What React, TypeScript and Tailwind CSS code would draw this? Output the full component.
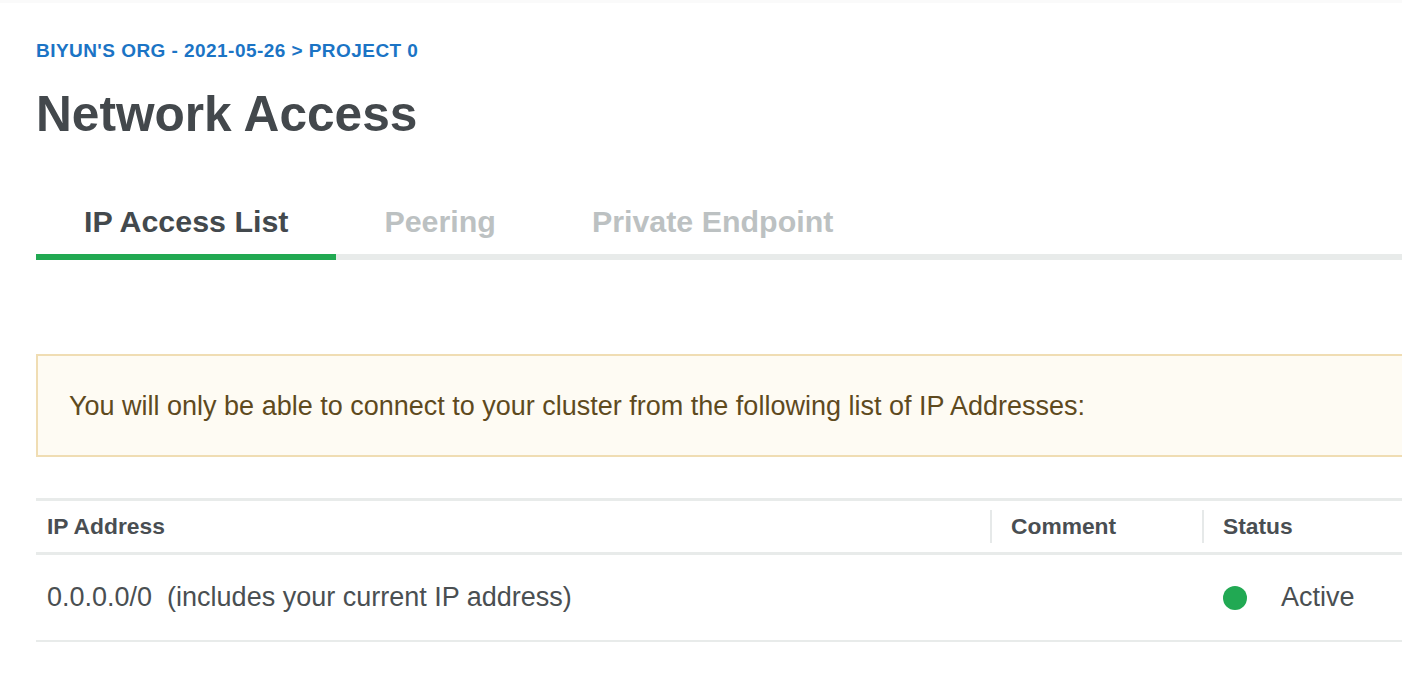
const tabs = [
  { label: "IP Access List", active: true },
  { label: "Peering", active: false },
  { label: "Private Endpoint", active: false },
]

export default function App() {
  return (
    <div
      className="min-h-screen w-full overflow-hidden bg-white"
      style={{ fontFamily: '"Liberation Sans", Arial, sans-serif' }}
    >
      <div className="h-[3px] bg-[#fafafa]" />
      <div className="w-[1440px] pl-[36px]">
        {/* Breadcrumb */}
        <div className="mt-[36px] text-[19px] font-bold leading-[24px] tracking-[0.45px] text-[#1b74c5]">
          BIYUN'S ORG - 2021-05-26 &gt; PROJECT 0
        </div>

        <h1 className="mt-[23px] text-[49.6px] font-bold leading-[56px] text-[#43484c]">
          Network Access
        </h1>

        {/* Tabs */}
        <div className="mt-[61px] flex">
          {tabs.map((tab) => (
            <div
              key={tab.label}
              className={
                tab.active
                  ? "border-b-[6px] border-[#21a952] px-[48px] pb-[15px] text-[30.4px] font-bold leading-[36px] text-[#43494d]"
                  : "border-b-[6px] border-[#e8ebea] px-[48px] pb-[15px] text-[30.4px] font-bold leading-[36px] text-[#bcc1c2]"
              }
            >
              {tab.label}
            </div>
          ))}
          <div className="flex-1 border-b-[6px] border-[#e8ebea]" />
        </div>

        {/* Banner */}
        <div className="mt-[94px] flex h-[103px] items-center border-2 border-[#f0ddb3] bg-[#fefbf3] pl-[31px]">
          <p className="text-[27px] leading-[32px] text-[#5e4a1e]">
            You will only be able to connect to your cluster from the following list of IP Addresses:
          </p>
        </div>

        {/* Table */}
        <div className="mt-[41px] border-t-[3px] border-[#e8ebea]">
          <div className="flex h-[54px] items-center border-b-[3px] border-[#e8ebea] text-[22.8px] font-bold text-[#494e52]">
            <div className="w-[954px] pl-[11px]">IP Address</div>
            <div className="flex h-[33px] w-[212px] items-center border-l-2 border-[#e6e9e9] pl-[19px]">
              Comment
            </div>
            <div className="flex h-[33px] items-center border-l-2 border-[#e6e9e9] pl-[19px]">
              Status
            </div>
          </div>
          <div className="flex h-[87px] items-center border-b-2 border-[#e8ebea] text-[27px] text-[#4a4f52]">
            <div className="w-[954px] whitespace-pre pl-[11px]">
              0.0.0.0/0  (includes your current IP address)
            </div>
            <div className="w-[212px]" />
            <div className="flex items-center pl-[21px]">
              <span className="h-[24px] w-[24px] rounded-full bg-[#21a953]" />
              <span className="ml-[34px]">Active</span>
            </div>
          </div>
        </div>
      </div>
    </div>
  )
}
